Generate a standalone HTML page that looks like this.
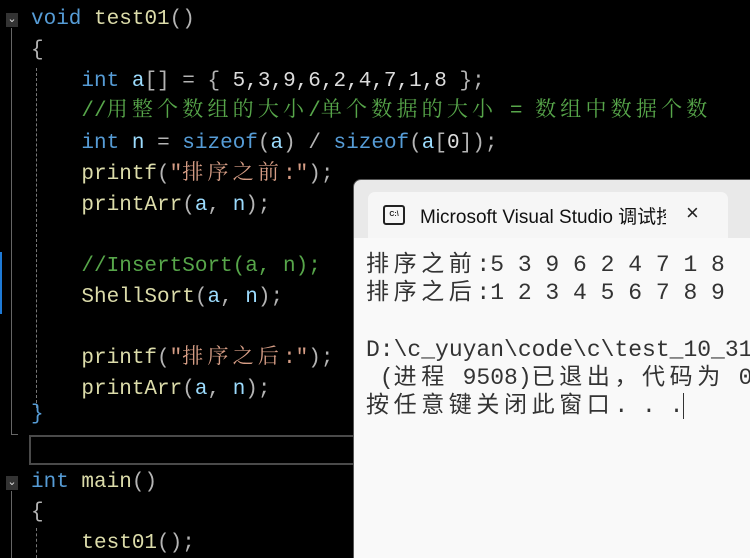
<!DOCTYPE html>
<html><head><meta charset="utf-8"><style>
html,body{margin:0;padding:0;background:#000;width:750px;height:558px;overflow:hidden;position:relative}
.code{position:absolute;left:31px;font-family:"Liberation Mono","Noto Sans CJK SC",monospace;font-size:21px;white-space:pre;color:#dcdcdc}
.l{position:absolute;height:30px;line-height:30px;white-space:pre}
.k{color:#569cd6}.f{color:#dcdcaa}.v{color:#9cdcfe}.s{color:#d69d85}.c{color:#57a64a}.p{color:#b4b4b4}
.cjk{font-family:"Noto Serif CJK SC","Noto Sans CJK SC",serif;letter-spacing:4.2px;line-height:20px}
.fold{position:absolute;left:6px;width:12px;height:14px;background:#333;color:#ddd;font-size:11px;text-align:center;line-height:12px}
.vl{position:absolute;width:1px;background:#666}
.dl{position:absolute;width:0;border-left:1px dashed #777}
.win{position:absolute;left:353px;top:179px;width:400px;height:390px;background:#e9e9e9;border-radius:8px 0 0 0;border:1px solid #555}
.tab{position:absolute;left:14px;top:12px;width:360px;height:48px;background:#f6f6f6;border-radius:7px 7px 0 0}
.content{position:absolute;left:0;top:58px;width:400px;height:340px;background:#f9f9f9}
.con{position:absolute;left:12px;font-family:"Liberation Mono","Noto Sans CJK SC",monospace;font-size:23px;color:#333;white-space:pre;line-height:28px}
.cc{letter-spacing:4.6px;line-height:20px}
</style></head><body>
<div class="fold" style="top:13px">⌄</div>
<div class="fold" style="top:476px">⌄</div>
<div class="vl" style="left:11px;top:28px;height:407px"></div>
<div style="position:absolute;left:11px;top:434px;width:7px;height:1px;background:#666"></div>
<div class="vl" style="left:11px;top:491px;height:70px"></div>
<div class="dl" style="left:36px;top:68px;height:340px"></div>
<div class="dl" style="left:36px;top:528px;height:30px"></div>
<div style="position:absolute;left:0;top:252px;width:2px;height:62px;background:#1e7ad6"></div>
<div style="position:absolute;left:29px;top:435px;width:330px;height:26px;border:2px solid #4a4a4a"></div>
<div class="code">
<div class="l" style="top:5px"><span class="k">void</span> <span class="f">test01</span><span class="p">()</span></div>
<div class="l" style="top:36px"><span class="p">{</span></div>
<div class="l" style="top:67px">    <span class="k">int</span> <span class="v">a</span><span class="p">[] = { </span>5,3,9,6,2,4,7,1,8<span class="p"> };</span></div>
<div class="l" style="top:97px">    <span class="c">//<span class="cjk">用整个数组的大小</span>/<span class="cjk">单个数据的大小</span> = <span class="cjk">数组中数据个数</span></span></div>
<div class="l" style="top:129px">    <span class="k">int</span> <span class="v">n</span> <span class="p">=</span> <span class="k">sizeof</span><span class="p">(</span><span class="v">a</span><span class="p">) / </span><span class="k">sizeof</span><span class="p">(</span><span class="v">a</span><span class="p">[</span>0<span class="p">]);</span></div>
<div class="l" style="top:160px">    <span class="f">printf</span><span class="p">(</span><span class="s">"<span class="cjk">排序之前</span>:"</span><span class="p">);</span></div>
<div class="l" style="top:191px">    <span class="f">printArr</span><span class="p">(</span><span class="v">a</span><span class="p">, </span><span class="v">n</span><span class="p">);</span></div>
<div class="l" style="top:252px">    <span class="c">//InsertSort(a, n);</span></div>
<div class="l" style="top:283px">    <span class="f">ShellSort</span><span class="p">(</span><span class="v">a</span><span class="p">, </span><span class="v">n</span><span class="p">);</span></div>
<div class="l" style="top:344px">    <span class="f">printf</span><span class="p">(</span><span class="s">"<span class="cjk">排序之后</span>:"</span><span class="p">);</span></div>
<div class="l" style="top:375px">    <span class="f">printArr</span><span class="p">(</span><span class="v">a</span><span class="p">, </span><span class="v">n</span><span class="p">);</span></div>
<div class="l" style="top:400px"><span class="k">}</span></div>
<div class="l" style="top:468px"><span class="k">int</span> <span class="f">main</span><span class="p">()</span></div>
<div class="l" style="top:498px"><span class="p">{</span></div>
<div class="l" style="top:529px">    <span class="f">test01</span><span class="p">();</span></div>
</div>
<div class="win">
<div class="tab">
<div style="position:absolute;left:15px;top:13px;width:18px;height:16px;border:2px solid #222;border-radius:3px;font:bold 7px 'Liberation Sans',sans-serif;line-height:16px;text-align:center;color:#222">C:\</div>
<div style="position:absolute;left:52px;top:10px;font:19px 'Liberation Sans','Noto Sans CJK SC',sans-serif;color:#111;white-space:nowrap;width:246px;overflow:hidden">Microsoft Visual Studio 调试控</div>
<div style="position:absolute;left:318px;top:8px;font:22px 'Liberation Sans',sans-serif;color:#222">×</div>
</div>
<div class="content">
<div class="con" style="top:13px"><span class="cc">排序之前</span>:5 3 9 6 2 4 7 1 8</div>
<div class="con" style="top:41px"><span class="cc">排序之后</span>:1 2 3 4 5 6 7 8 9</div>
<div class="con" style="top:98px">D:\c_yuyan\code\c\test_10_31</div>
<div class="con" style="top:126px"> (<span class="cc">进程</span> 9508)<span class="cc">已退出，代码为</span> 0</div>
<div class="con" style="top:154px"><span class="cc">按任意键关闭此窗口</span>. . .<span style="border-left:1px solid #333"> </span></div>
</div>
</div>
</body></html>
